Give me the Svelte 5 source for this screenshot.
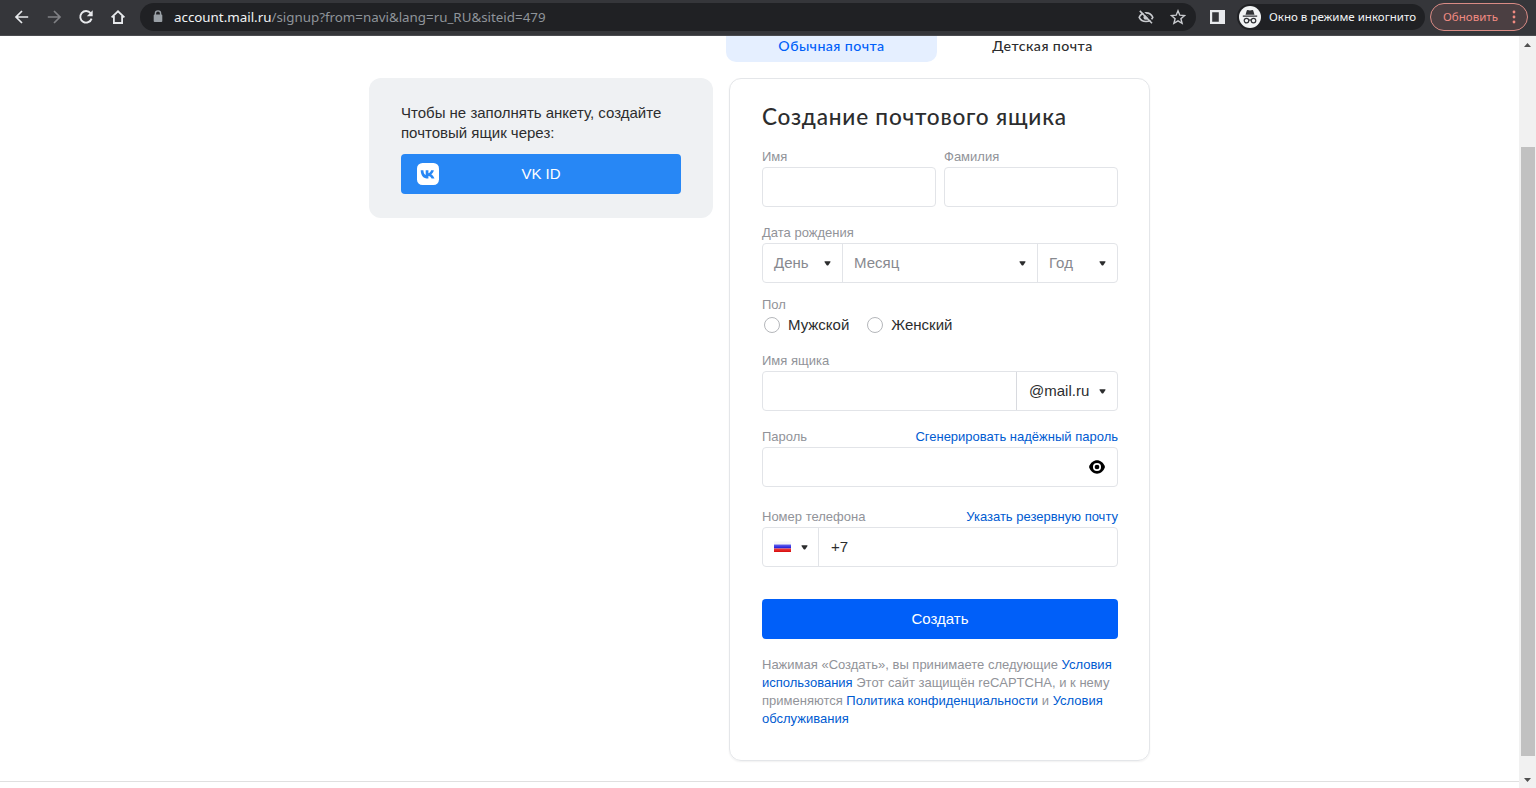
<script>
  const dateParts = ['День', 'Месяц', 'Год'];
</script>

{#snippet caret()}
  <svg class="caret" width="7" height="5" viewBox="0 0 7 5"><path d="M.9 .3h5.200q.7 0 .4.700L4.500 4.100q-1 1-2 0L.5 1Q.2.3.9.3z" fill="#2c2d2e" /></svg>
{/snippet}

<div class="window">
  <header class="toolbar">
    <nav class="nav">
      <svg width="16" height="16" viewBox="0 0 16 16" fill="none" stroke="#e8eaed" stroke-width="1.7"><path d="M14.2 8H2M8 2 2 8l6 6" /></svg>
      <svg width="16" height="16" viewBox="0 0 16 16" fill="none" stroke="#808185" stroke-width="1.7"><path d="M1.8 8H14M8 2l6 6-6 6" /></svg>
      <svg width="16" height="16" viewBox="0 0 16 16" fill="none" stroke="#e8eaed" stroke-width="1.9"><path d="M12.6 4.2A5.8 5.8 0 1 0 13.6 9.6" /><path d="M14.7 1.2v6H8.8z" fill="#e8eaed" stroke="none" /></svg>
      <svg width="16" height="16" viewBox="0 0 16 16" fill="none" stroke="#e8eaed" stroke-width="1.8"><path d="M1.6 8.3 8 2.3l6.4 6M3.9 7v7h8.2V7" /></svg>
    </nav>
    <div class="address">
      <svg class="lock" width="10" height="13" viewBox="0 0 10 13"><path d="M2.4 5V3.5a2.6 2.6 0 0 1 5.2 0V5" fill="none" stroke="#9aa0a6" stroke-width="1.4" /><rect x=".7" y="4.5" width="8.6" height="7.5" rx="1" fill="#9aa0a6" /></svg>
      <span class="url"><b>account.mail.ru</b>/signup?from=navi&amp;lang=ru_RU&amp;siteid=479</span>
      <svg class="blocked" width="16" height="16" viewBox="0 0 16 16" fill="none" stroke="#c9cbcf"><path d="M1.2 8.3C3.8 2.4 12.2 2.4 14.8 8.3 12.2 13.8 3.8 13.8 1.2 8.3z" stroke-width="1.6" /><circle cx="8" cy="8.2" r="2.5" fill="#c9cbcf" stroke="none" /><path d="M3.1 1 15.2 13.1" stroke="#202124" stroke-width="1.6" /><path d="M1.8 1.9 14 14.2" stroke-width="1.6" /></svg>
      <svg class="star" width="16" height="16" viewBox="0 0 16 16"><path d="M8 1.8l1.8 4.4 4.8.4-3.7 3.1 1.2 4.6L8 11.8l-4.1 2.5 1.2-4.6-3.7-3.1 4.8-.4z" fill="none" stroke="#c9cbcf" stroke-width="1.4" /></svg>
    </div>
    <svg class="panel" width="15" height="14" viewBox="0 0 15 14"><path fill="#e8eaed" fill-rule="evenodd" d="M0 0h15v14H0zM2.2 2.2v9.6h6.6V2.2z" /></svg>
    <div class="incognito">
      <svg width="22" height="22" viewBox="0 0 22 22"><circle cx="11" cy="11" r="11" fill="#f1f3f4" /><path d="M7.8 4.6q.2-.8 1-.6l2.2.6 2.2-.6q.8-.2 1 .6l1.3 4.2h-9zM3.8 9.6h14.4v1.2H3.8z" fill="#303236" /><g fill="none" stroke="#303236" stroke-width="1.2"><circle cx="7.5" cy="14.6" r="2.3" /><circle cx="14.5" cy="14.6" r="2.3" /><path d="M9.7 14.2q1.3-.8 2.6 0" /></g></svg>
      <span>Окно в режиме инкогнито</span>
    </div>
    <div class="update">
      <span>Обновить</span>
      <svg width="4" height="14" viewBox="0 0 4 14" fill="#f28b82"><circle cx="2" cy="2" r="1.4" /><circle cx="2" cy="7" r="1.4" /><circle cx="2" cy="12" r="1.4" /></svg>
    </div>
  </header>

  <div class="viewport">
    <main>
      <div class="tabs">
        <div class="tab active"><span>Обычная почта</span></div>
        <div class="tab"><span>Детская почта</span></div>
      </div>
      <div class="columns">
        <aside>
          <p>Чтобы не заполнять анкету, создайте почтовый ящик через:</p>
          <div class="vk">
            <svg width="22" height="22" viewBox="0 0 22 22"><rect width="22" height="22" rx="5.500" fill="#fff" /><path d="M3.700 7.200h2.700c.1 3.200 1.300 4.400 2.300 4.800V7.200h2.700v3c1-.2 2.200-1.300 2.700-3h2.700c-.3 2-1.600 3.500-2.700 4.100 1 .5 2.600 1.800 3.400 4.300h-2.900c-.5-1.400-1.600-2.400-3.200-2.600v2.600H11C6.500 15.600 3.800 12.600 3.700 7.200z" fill="#2787f5" /></svg>
            <span>VK ID</span>
          </div>
        </aside>

        <section class="card">
          <h1>Создание почтового ящика</h1>
          <div class="names">
            <div class="field"><div class="label"><span>Имя</span></div><div class="box"></div></div>
            <div class="field"><div class="label"><span>Фамилия</span></div><div class="box"></div></div>
          </div>
          <div class="field birth">
            <div class="label"><span>Дата рождения</span></div>
            <div class="box dates">
              {#each dateParts as part}
                <div class="part"><span>{part}</span>{@render caret()}</div>
              {/each}
            </div>
          </div>
          <div class="gender">
            <div class="label"><span>Пол</span></div>
            <div class="radios">
              <div class="radio"><i></i><span>Мужской</span></div>
              <div class="radio"><i></i><span>Женский</span></div>
            </div>
          </div>
          <div class="field mailbox">
            <div class="label"><span>Имя ящика</span></div>
            <div class="box"><div class="grow"></div><div class="domain"><span>@mail.ru</span>{@render caret()}</div></div>
          </div>
          <div class="field password">
            <div class="label"><span>Пароль</span><a class="generate">Сгенерировать надёжный пароль</a></div>
            <div class="box end">
              <svg width="16" height="14" viewBox="0 0 16 14"><path d="M0 7C3-1.9 13-1.9 16 7 13 15.900 3 15.900 0 7z" fill="#000" /><circle cx="8" cy="7" r="3.200" fill="none" stroke="#fff" stroke-width="1.7" /></svg>
            </div>
          </div>
          <div class="field phone">
            <div class="label"><span>Номер телефона</span><a class="reserve">Указать резервную почту</a></div>
            <div class="box">
              <div class="country">
                <svg width="17" height="12" viewBox="0 0 17 12"><defs><linearGradient id="blue" x2="0" y2="1"><stop stop-color="#6666ee" /><stop offset="1" stop-color="#1712d8" /></linearGradient><linearGradient id="red" x2="0" y2="1"><stop stop-color="#f04040" /><stop offset="1" stop-color="#d60c0c" /></linearGradient></defs><path d="M0 .5h17v4H0z" fill="#f5f5f7" /><path d="M0 3.500h17v4H0z" fill="url(#blue)" /><path d="M0 7.500h17v3.500H0z" fill="url(#red)" /></svg>
                {@render caret()}
              </div>
              <span class="prefix">+7</span>
            </div>
          </div>
          <div class="submit">Создать</div>
          <p class="legal">Нажимая «Создать», вы принимаете следующие <a>Условия<br />использования</a> Этот сайт защищён reCAPTCHA, и к нему<br />применяются <a>Политика конфиденциальности</a> и <a>Условия<br />обслуживания</a></p>
        </section>
      </div>
      <div class="rule"></div>
    </main>
    <div class="scroll">
      <svg width="16" height="17" viewBox="0 0 16 17"><path d="M8.500 7 12 11H5z" fill="#505050" /></svg>
      <div class="track"><div class="thumb"></div></div>
      <svg width="16" height="17" viewBox="0 0 16 17"><path d="M5 7h7l-3.500 4z" fill="#505050" /></svg>
    </div>
  </div>
</div>

<style>
  :global(body) { margin: 0; overflow: hidden; }
  * { box-sizing: border-box; }
  svg { display: block; flex: none; }
  .window { width: 1536px; height: 788px; overflow: hidden; display: flex; flex-direction: column; background: #fff; color: #2c2d2e; font: 15px/20px "Liberation Sans", Arial, sans-serif; white-space: nowrap; }
  .toolbar { height: 36px; flex: none; background: #35363a; border-bottom: 1px solid #4a4b4f; display: flex; align-items: center; padding: 0 8px 2px 14px; font-family: "Noto Sans", sans-serif; }
  .nav { display: flex; gap: 16px; width: 126px; }
  .address { width: 1056px; height: 28px; border-radius: 14px; background: #202124; display: flex; align-items: center; padding: 0 10px 0 13px; }
  .url { margin-left: 11px; font-size: 13.35px; color: #8f949a; }
  .url b { font-weight: 400; color: #f1f3f4; }
  .blocked { margin-left: auto; }
  .star { margin-left: 16px; }
  .panel { margin-left: 14px; }
  .incognito { margin-left: 12px; width: 188px; height: 26px; border-radius: 13px; background: #202124; display: flex; align-items: center; padding-left: 2px; gap: 8px; color: #f1f3f4; font-size: 11.55px; }
  .update { margin-left: 5px; width: 98px; height: 28px; border: 1px solid #d98b85; border-radius: 14px; background: #4b3f42; display: flex; align-items: center; justify-content: space-between; padding: 0 11px 0 12px; color: #f28b82; font-size: 11.55px; }
  .viewport { display: flex; flex: 1; min-height: 0; }
  main { flex: 1; display: flex; flex-direction: column; }
  .tabs { display: flex; padding-left: 726px; margin-bottom: 16px; font-family: Lato, sans-serif; font-weight: 500; font-size: 14.2px; letter-spacing: .43px; }
  .tab { width: 211px; height: 26px; display: flex; justify-content: center; border-radius: 0 0 10px 10px; }
  .active { background: #e5efff; color: #005ff9; }
  .columns { display: flex; align-items: flex-start; gap: 16px; padding-left: 369px; }
  aside { width: 344px; height: 140px; background: #eff1f3; border-radius: 12px; padding: 25px 32px; }
  p { margin: 0; }
  aside p { white-space: normal; }
  .vk { margin-top: 11px; height: 40px; border-radius: 4px; background: #2787f5; display: grid; grid-template-columns: 22px 1fr 22px; align-items: center; padding: 0 16px; color: #fff; text-align: center; }
  .card { width: 421px; height: 683px; border: 1px solid #e4e6e9; border-radius: 12px; padding: 21px 31px 0 32px; box-shadow: 0 1px 2px #0000000f; }
  h1 { margin: 0 0 14px; font: 500 22.600px/34px Lato, sans-serif; letter-spacing: .78px; }
  .names { display: grid; grid-template-columns: 1fr 1fr; gap: 8px; }
  .label { height: 16px; font-size: 13px; line-height: 18px; color: #919399; display: flex; justify-content: space-between; }
  a { color: #005bd1; }
  .box { height: 40px; margin-top: 3px; border: 1px solid #e2e4e8; border-radius: 4px; display: flex; align-items: stretch; }
  .birth, .password { margin-top: 17px; }
  .mailbox { margin-top: 18px; }
  .dates { display: grid; grid-template-columns: 79px 195px 1fr; color: #87898f; }
  .part { display: flex; align-items: center; justify-content: space-between; padding: 0 11px; }
  .part + .part { border-left: 1px solid #e2e4e8; }
  .gender { margin-top: 13px; }
  .radios { display: flex; gap: 18px; margin: 4px 0 0 2px; height: 18px; }
  .radio { display: flex; align-items: center; gap: 8px; line-height: 18px; }
  .radio i { width: 16px; height: 16px; border: 1px solid #b5b7bb; border-radius: 50%; }
  .grow { flex: 1; }
  .domain { width: 101px; border-left: 1px solid #d8dadf; display: flex; align-items: center; justify-content: space-between; padding: 0 11px 0 12px; }
  .phone { margin-top: 21px; }
  .end { align-items: center; justify-content: flex-end; padding-right: 12px; }
  .country { width: 56px; border-right: 1px solid #e2e4e8; display: flex; align-items: center; padding-left: 11px; gap: 10px; }
  .prefix { margin-left: 12px; line-height: 38px; }
  .submit { margin-top: 32px; height: 40px; border-radius: 4px; background: #005ff9; color: #fff; text-align: center; line-height: 40px; }
  .legal { margin-top: 17px; font-size: 13px; line-height: 18px; color: #919399; }
  .rule { margin-top: 20px; height: 1px; background: #e0e0e0; }
  .scroll { width: 17px; background: #f1f1f1; display: flex; flex-direction: column; }
  .track { flex: 1; padding: 94px 1px 0 2px; }
  .thumb { height: 609px; background: #c1c1c1; }
</style>
